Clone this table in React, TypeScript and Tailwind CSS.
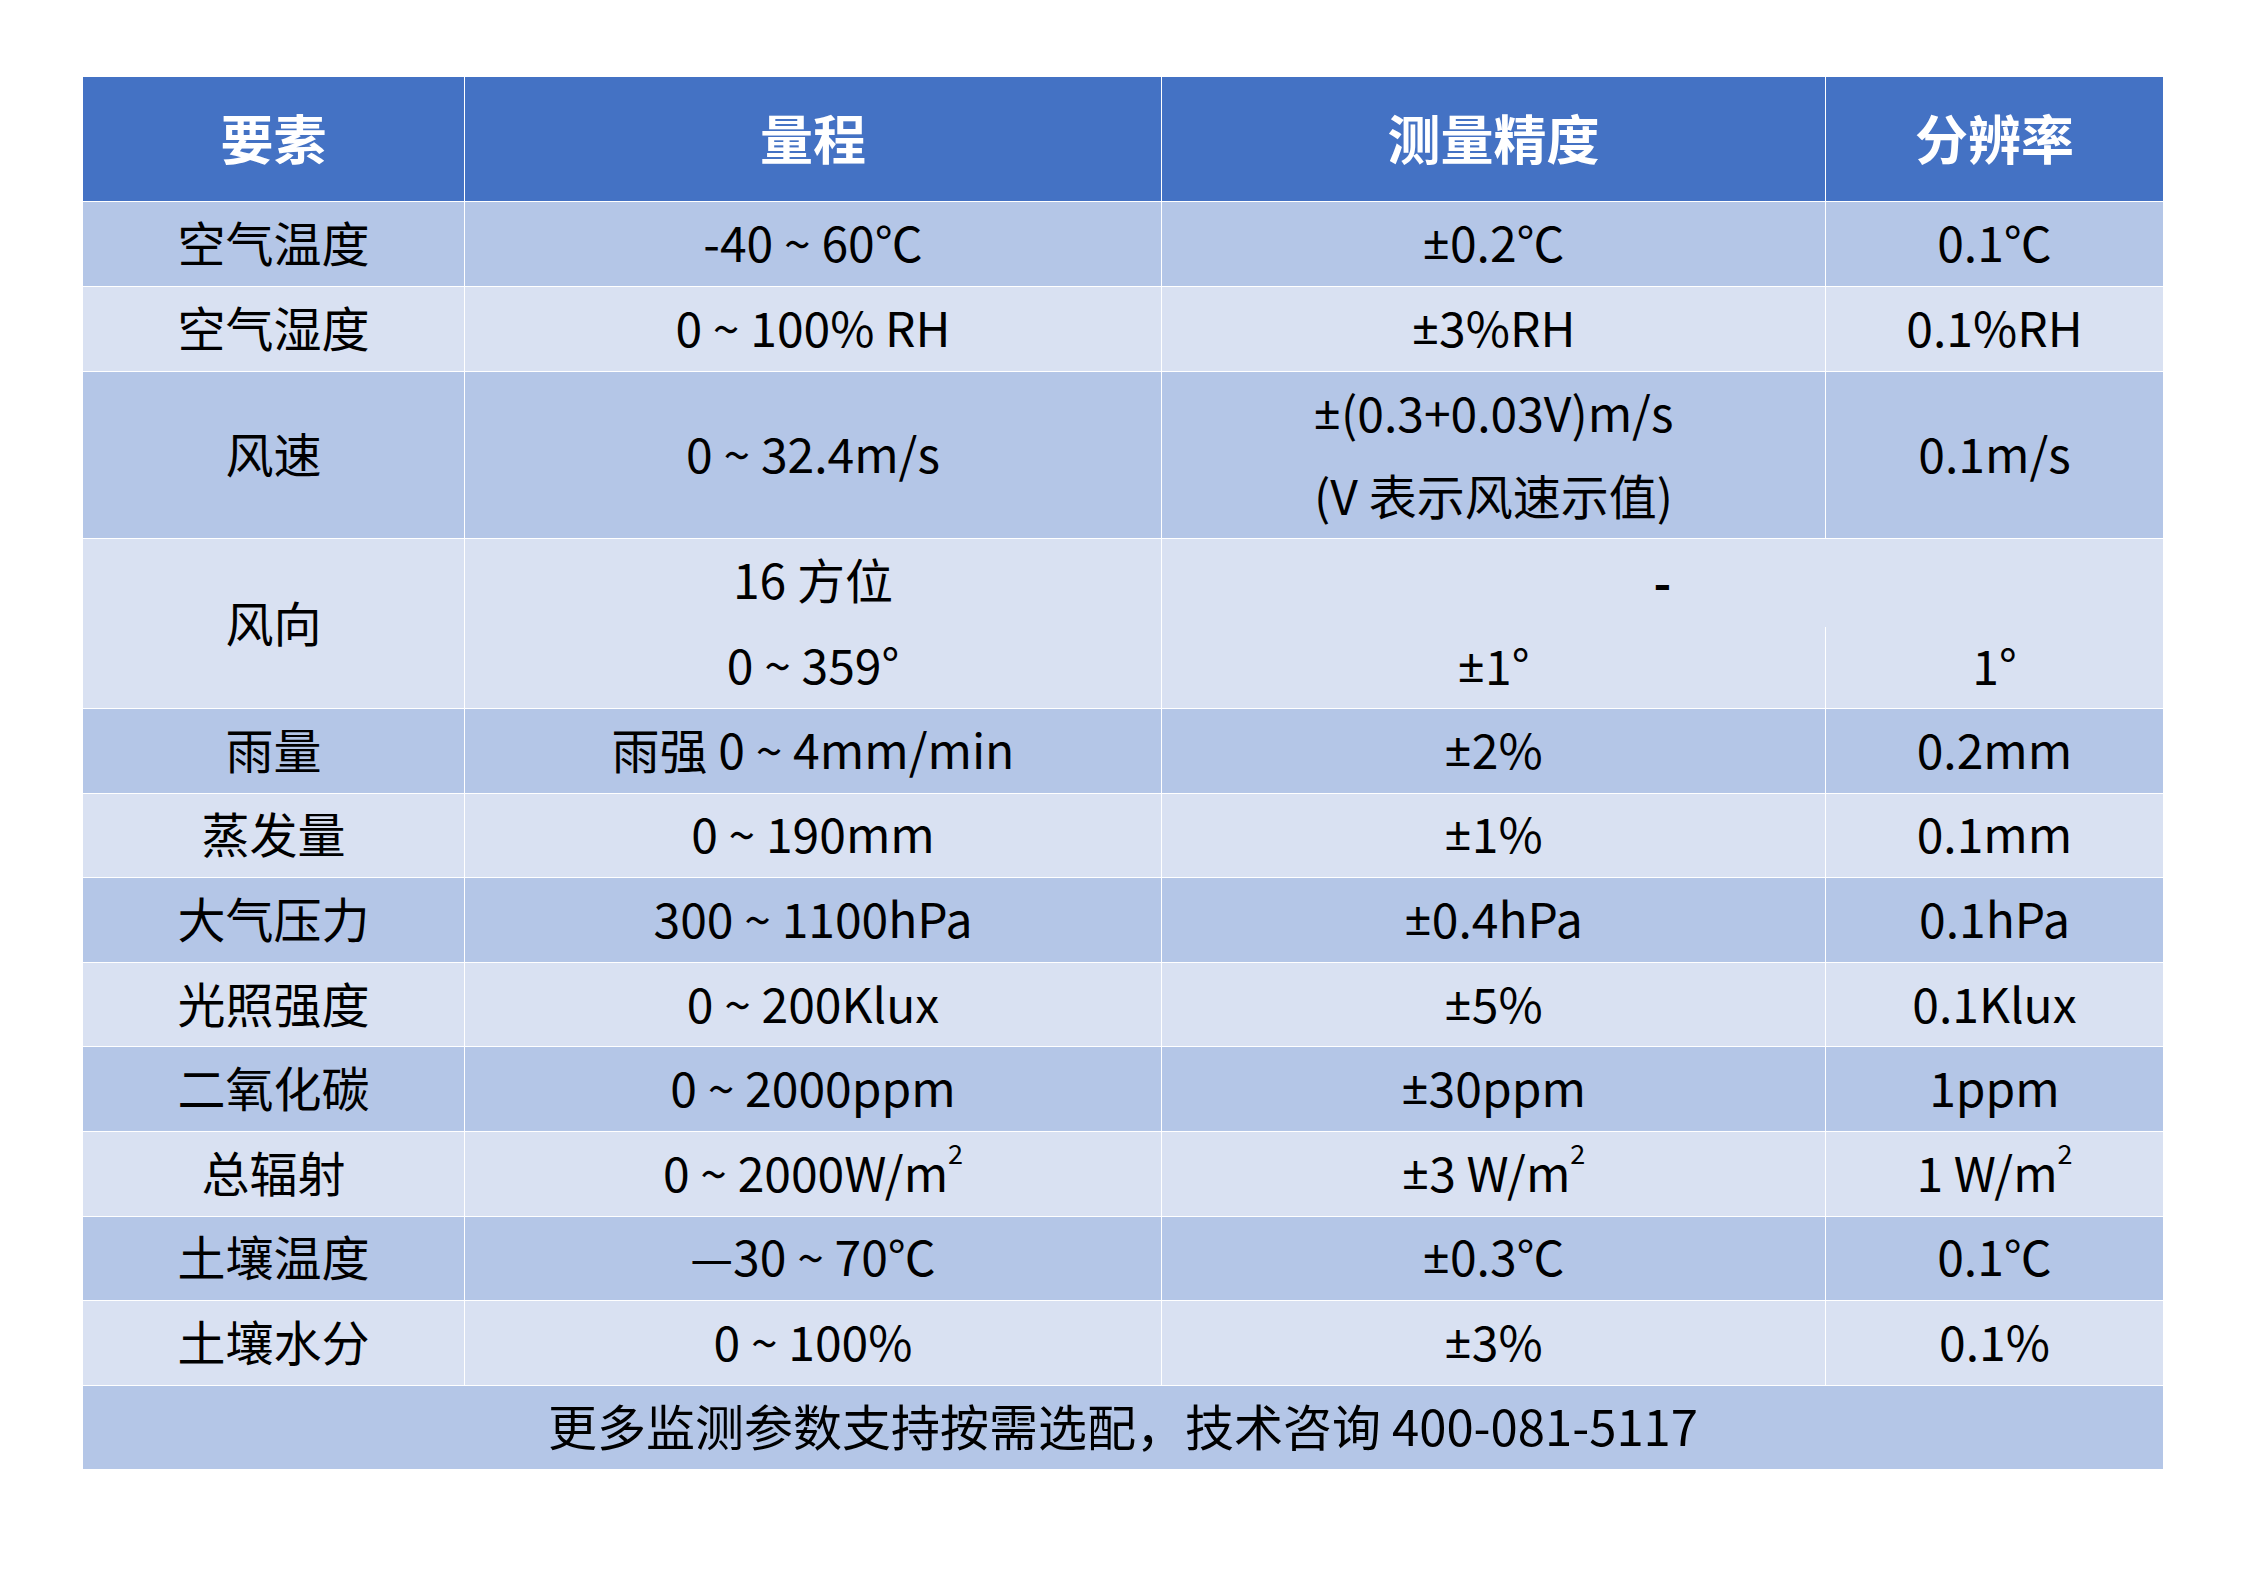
import React from "react";

const DARK = "bg-[#B4C6E7]";
const LIGHT = "bg-[#D9E1F2]";

function Cell({
  children,
  bg,
  className = "",
}: {
  children?: React.ReactNode;
  bg: string;
  className?: string;
}) {
  return (
    <div className={`${bg} flex items-center justify-center whitespace-nowrap pb-[6px] ${className}`}>
      {children}
    </div>
  );
}

function Half({ children }: { children?: React.ReactNode }) {
  return <div className="flex flex-1 items-center justify-center whitespace-nowrap pb-[6px]">{children}</div>;
}

function Sup({ children }: { children: React.ReactNode }) {
  return <span className="relative -top-[18px] text-[27px] leading-none">{children}</span>;
}

function PM() {
  return <span className="font-['Noto_Sans',sans-serif]">±</span>;
}

function fmt(v: React.ReactNode): React.ReactNode {
  if (typeof v === "string" && v.startsWith("±")) {
    return (
      <>
        <PM />
        {v.slice(1)}
      </>
    );
  }
  return v;
}

type Row = { name: string; range: React.ReactNode; acc: React.ReactNode; res: React.ReactNode };

const rowsA: Row[] = [
  { name: "空气温度", range: "-40 ~ 60℃", acc: "±0.2℃", res: "0.1℃" },
  { name: "空气湿度", range: "0 ~ 100% RH", acc: "±3%RH", res: "0.1%RH" },
];

const rowsB: Row[] = [
  { name: "雨量", range: "雨强 0 ~ 4mm/min", acc: "±2%", res: "0.2mm" },
  { name: "蒸发量", range: "0 ~ 190mm", acc: "±1%", res: "0.1mm" },
  { name: "大气压力", range: "300 ~ 1100hPa", acc: "±0.4hPa", res: "0.1hPa" },
  { name: "光照强度", range: "0 ~ 200Klux", acc: "±5%", res: "0.1Klux" },
  { name: "二氧化碳", range: "0 ~ 2000ppm", acc: "±30ppm", res: "1ppm" },
  {
    name: "总辐射",
    range: (
      <>
        0 ~ 2000W/m<Sup>2</Sup>
      </>
    ),
    acc: (
      <>
        <PM />3 W/m<Sup>2</Sup>
      </>
    ),
    res: (
      <>
        1 W/m<Sup>2</Sup>
      </>
    ),
  },
  { name: "土壤温度", range: "—30 ~ 70℃", acc: "±0.3℃", res: "0.1℃" },
  { name: "土壤水分", range: "0 ~ 100%", acc: "±3%", res: "0.1%" },
];

function DataRow({ r, bg }: { r: Row; bg: string }) {
  return (
    <>
      <Cell bg={bg}>{r.name}</Cell>
      <Cell bg={bg}>{fmt(r.range)}</Cell>
      <Cell bg={bg}>{fmt(r.acc)}</Cell>
      <Cell bg={bg}>{fmt(r.res)}</Cell>
    </>
  );
}

export default function App() {
  return (
    <div className="min-h-[1587px] w-[2245px] bg-white pt-[77px] pl-[83px] font-['Noto_Sans_CJK_SC',sans-serif] text-black">
      <div className="grid w-[2080px] grid-cols-[381px_696px_663px_337px] grid-rows-[124px_84px_84px_82.5px_82.5px_84px_84px_repeat(8,83.6px)_83px] gap-px bg-white text-[48px] leading-none">
        {["要素", "量程", "测量精度", "分辨率"].map((h) => (
          <div
            key={h}
            className="flex items-center justify-center bg-[#4472C4] pb-[3px] text-[53px] font-bold text-white"
          >
            {h}
          </div>
        ))}

        {rowsA.map((r, i) => (
          <DataRow key={r.name} r={r} bg={i % 2 === 0 ? DARK : LIGHT} />
        ))}

        {/* 风速 */}
        <Cell bg={DARK} className="row-span-2">风速</Cell>
        <Cell bg={DARK} className="row-span-2">0 ~ 32.4m/s</Cell>
        <div className={`${DARK} row-span-2 flex flex-col`}>
          <Half>
            <PM />
            (0.3+0.03V)m/s
          </Half>
          <Half>(V 表示风速示值)</Half>
        </div>
        <Cell bg={DARK} className="row-span-2">0.1m/s</Cell>

        {/* 风向 */}
        <Cell bg={LIGHT} className="row-span-2">风向</Cell>
        <div className={`${LIGHT} row-span-2 flex flex-col`}>
          <Half>16 方位</Half>
          <Half>0 ~ 359°</Half>
        </div>
        <div className={`${LIGHT} col-span-2 row-span-2 flex flex-col`}>
          <Half>
            <span className="font-bold">-</span>
          </Half>
          <div className="flex flex-1">
            <div className="flex w-[663px] items-center justify-center pb-[6px]">
              <PM />1°
            </div>
            <div className="w-px bg-white" />
            <div className="flex flex-1 items-center justify-center pb-[6px]">1°</div>
          </div>
        </div>

        {rowsB.map((r, i) => (
          <DataRow key={r.name} r={r} bg={i % 2 === 0 ? DARK : LIGHT} />
        ))}

        <Cell bg={DARK} className="col-span-4 text-[49px]">
          更多监测参数支持按需选配，技术咨询 400-081-5117
        </Cell>
      </div>
    </div>
  );
}
